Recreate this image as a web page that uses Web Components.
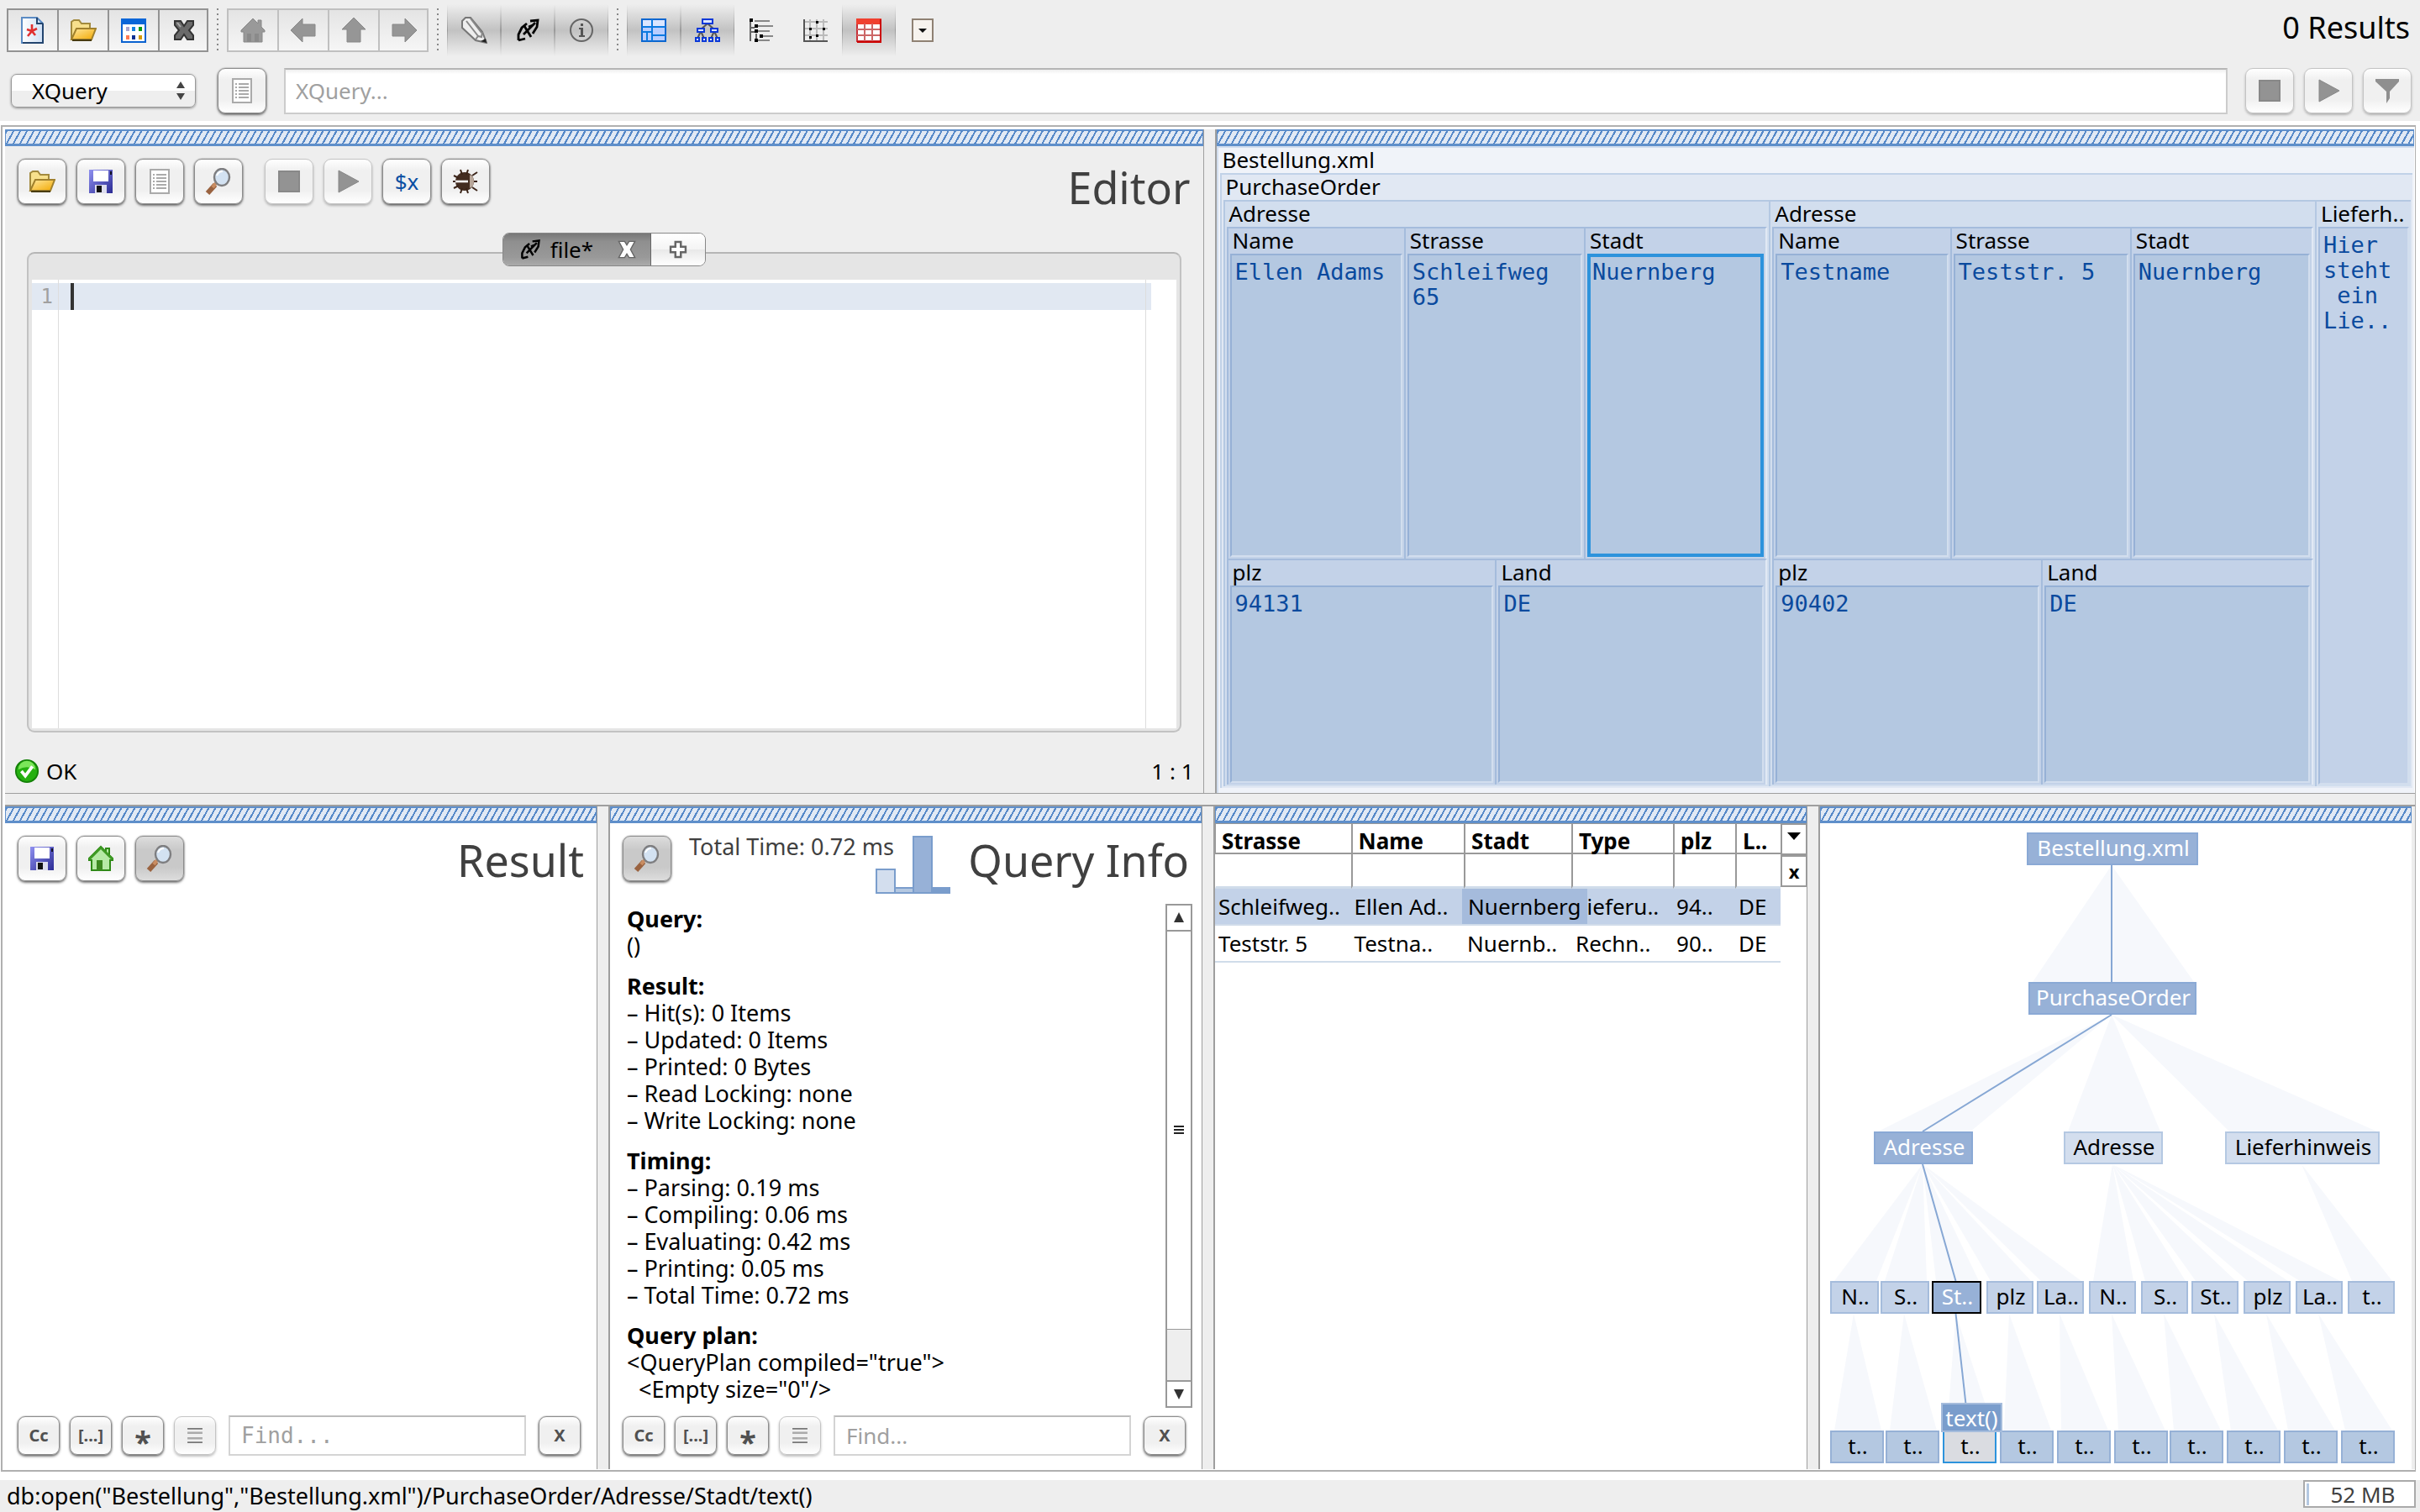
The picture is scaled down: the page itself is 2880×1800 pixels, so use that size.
<!DOCTYPE html>
<html lang="en">
<head>
<meta charset="utf-8">
<title>BaseX - Bestellung</title>
<style>
  html, body { margin: 0; height: 100%; }
  body { background: #fff; color: #000; font: 26px/32px "Noto Sans", "Open Sans", sans-serif; }
</style>
</head>
<body>
<bx-app></bx-app>

<script>
// ---- icons -------------------------------------------------------------

const ICONS = {
  new: `<defs><linearGradient id="a" x2="1"><stop stop-color="#fff"/><stop offset="1" stop-color="#cfe0f5"/></linearGradient></defs>
    <path d="M3 1h18l7 7v23H3z" fill="url(#a)" stroke="#5b8bc4" stroke-width="2"/><path d="M21 1v7h7M28 8v23H4" fill="none" stroke="#23456f" stroke-width="2"/>
    <path d="M15 9v8m0 0l-6-2m6 2l6-3m-6 3l-5 6m5-6l4 5" fill="none" stroke="#e03030" stroke-width="2.6"/>`,
  open: `<defs><linearGradient id="b" x2="1" y2="1"><stop stop-color="#ffe9a0"/><stop offset="1" stop-color="#f2a800"/></linearGradient></defs>
    <path d="M2 27V6l3-2h6l3 4h10v6" fill="#f7e08c" stroke="#a28a3e" stroke-width="2"/><path d="M2 27l6-13h23l-5 13z" fill="url(#b)" stroke="#a0802c" stroke-width="2"/><path d="M3 28h23" stroke="#493c10" stroke-width="2"/>`,
  manage: `<rect x="2" y="3" width="28" height="27" fill="#fff" stroke="#0a62d0" stroke-width="2"/><path d="M1 2h30v7H1z" fill="#0a66d8"/>
    <path d="M7 12h4v5H7z" fill="#a9a4cf"/><path d="M14 12h4v5h-4z" fill="#1583e0"/><path d="M22 12h4v5h-4z" fill="#0a9a12"/>
    <path d="M7 22h4v5H7z" fill="#ff7a52"/><path d="M14 22h4v5h-4z" fill="#0a2f92"/><path d="M22 22h4v5h-4z" fill="#d39a06"/>`,
  close: `<path d="M5 5h7l4 6 4-6h7v5l-5 6 5 6v5h-7l-4-6-4 6H5v-5l5-6-5-6z" fill="#6a6a6a" stroke="#333" stroke-width="2"/><path d="M8 7l4 5" stroke="#aaa" stroke-width="2"/>`,
  home: `<path d="M16 2L2 16v2h3v12h22V18h3v-2l-4-4V4h-4v4z" fill="#999" stroke="#888" stroke-width="1"/><path d="M9 20h5v10H9zM18 20h5v10h-5z" fill="#8a8a8a"/>`,
  back: `<path d="M1 16L15 2v7h15v14H15v7z" fill="#969696" stroke="#888"/>`,
  up: `<path d="M16 1L30 15h-6v15H8V15H2z" fill="#969696" stroke="#888"/>`,
  forward: `<path d="M31 16L17 2v7H2v14h15v7z" fill="#969696" stroke="#888"/>`,
  pencil: `<path d="M2 5l4-4h6l14 17 5 13-13-3L2 13z" fill="#eee" stroke="#777" stroke-width="2"/><path d="M7 5l14 18M12 2l13 17M18 27l3-4 4 1 1-6" stroke="#888" stroke-width="2" fill="none"/><path d="M24 29l6-3 1 5z" fill="#222"/>`,
  query: `<path d="M5 28v-7l4-8 6-5M5 28l8-2M19 5l9-1-1 8-5 8M12 11l8 13M25 7L11 21M17 12l5-2" fill="none" stroke="#000" stroke-width="2.8"/>`,
  info: `<circle cx="16" cy="16" r="13" fill="none" stroke="#666" stroke-width="2"/><path d="M15 8h3v3h-3zM13 13h5v9h2v2h-7v-2h2v-7h-2z" fill="#555"/>`,
  map: `<rect x="2" y="3" width="28" height="26" fill="#b9ceff" stroke="#0a66d0" stroke-width="2"/><path d="M3 4h10v7H3zM15 4h14v7H15z" fill="#dbe6ff"/><path d="M2 12h28M14 3v26M2 18h12M8 18v11M14 22h16" stroke="#0c7ae0" stroke-width="2"/>`,
  tree: `<path d="M16 8l-8 7M16 8l8 7M8 17l-4 9M8 17l4 9M24 17l-4 9M24 17l4 9" stroke="#555" stroke-width="2"/>
    <g fill="#dce6ff" stroke="#0a38d8" stroke-width="2"><path d="M10 3h12v5H10zM4 14h8v4H4zM20 14h8v4h-8z"/><path d="M2 25h4v4H2zM10 25h4v4h-4zM18 25h4v4h-4zM26 25h4v4h-4z"/></g>`,
  folder: `<path d="M3 4v25M3 13h5M3 18h5M10 20v8" stroke="#666" stroke-width="2"/><path d="M8 5h18M12 11h18M12 17h14M18 23h12M12 28h14" stroke="#888" stroke-width="2"/>
    <path d="M2 2h4v4H2zM8 9h4v4H8zM8 15h4v4H8zM14 21h4v4h-4zM8 26h4v4H8z"/>`,
  plot: `<path d="M10 3v26M18 3v26M26 3v26M3 6h28M3 14h28M3 22h28" stroke="#bbb" stroke-width="2"/><path d="M3 3v26h28" fill="none" stroke="#555" stroke-width="2"/><path d="M17 5h3v3h-3zM9 13h3v3H9zM25 13h3v3h-3zM17 21h3v3h-3zM9 23h3v3H9z"/>`,
  table: `<rect x="2" y="3" width="28" height="26" fill="#fff" stroke="#c83038" stroke-width="2"/><path d="M1 2h30v7H1z" fill="#f0402f"/><path d="M11 8v21M20 8v21M2 15h28M2 22h28" stroke="#c66" stroke-width="2"/><path d="M30 3v27H2" fill="none" stroke="#c00" stroke-width="2"/>`,
  drop: `<rect x="4" y="3" width="24" height="26" fill="#f7f3ee" stroke="#8f8173" stroke-width="2"/><path d="M11 14h10l-5 5z" fill="#111"/>`,
  doc: `<rect x="5" y="2" width="22" height="28" fill="#fff" stroke="#aaa" stroke-width="2"/><path d="M12 8h12M12 12h12M12 16h12M12 20h12M12 24h12M8 8h2M8 12h2M8 16h2M8 20h2M8 24h2" stroke="#aaa" stroke-width="2"/>`,
  save: `<defs><linearGradient id="c" x2="1" y2="1"><stop stop-color="#8f90f0"/><stop offset="1" stop-color="#2b2b94"/></linearGradient></defs>
    <path d="M2 2h28v28H2z" fill="url(#c)"/><path d="M7 3h18v13H7z" fill="#fff"/><path d="M9 20h14v10H9z" fill="#dde"/><path d="M11 21h6v8h-6z" fill="#111"/><path d="M27 4h2v4h-2z" fill="#112"/>`,
  find: `<path d="M12 20L3 30" stroke="#9a6340" stroke-width="6"/><path d="M13 18l-4 5" stroke="#c98d62" stroke-width="4"/><ellipse cx="20" cy="11" rx="9" ry="10" fill="#d3e2f2" stroke="#7e7e80" stroke-width="2.4"/><path d="M14 9q2-5 7-5" stroke="#fff" stroke-width="2" fill="none"/>`,
  stop: `<path d="M4 4h24v24H4z" fill="#939393" stroke="#888" stroke-width="2"/>`,
  play: `<path d="M5 3l24 13L5 29z" fill="#939393" stroke="#888"/>`,
  filter: `<path d="M2 2h28v3L19 17v8l-4 6V17L2 5z" fill="#8f8f8f"/>`,
  bug: `<ellipse cx="15" cy="16" rx="11" ry="11" fill="#432c20"/><path d="M2 9l6 3M1 16h6M2 24l6-3M10 2l2 6M19 2l-2 6M10 30l2-6M19 30l-2-6M24 9l6-4M26 16h4M24 23l6 4" stroke="#3b2418" stroke-width="2"/><path d="M4 16h15" stroke="#fff" stroke-width="2.6"/><path d="M21 8v16q5-2 5-8t-5-8z" fill="#b9a79a"/>`,
  green: `<path d="M16 2L2 16v2h3v12h22V18h3v-2l-4-4V4h-4v4z" fill="#b6eaa6" stroke="#2f8a17" stroke-width="2"/><path d="M16 3L2 17M16 3l14 14" stroke="#3e9a24" stroke-width="3"/><path d="M11 18h7v12h-7z" fill="#3c8a20"/>`,
  list: `<path d="M5 6h22M5 26h22" stroke="#777" stroke-width="2"/><path d="M5 12h22M5 20h22" stroke="#aaa" stroke-width="3"/>`,
  ok: `<circle cx="16" cy="16" r="14" fill="#25b010" stroke="#148108" stroke-width="2"/><path d="M5 14a11 11 0 0122 0q-11-6-22 0z" fill="#7be65a"/><path d="M9 16l5 6 9-12" fill="none" stroke="#fff" stroke-width="4"/>`,
  cross: `<path d="M5 5h8l3 5 3-5h8l-6 11 6 11h-8l-3-5-3 5H5l6-11z" fill="#fff" stroke="#666" stroke-width="1.6"/>`,
  plus: `<path d="M12 5h8v7h7v8h-7v7h-8v-7H5v-8h7z" fill="#fff" stroke="#666" stroke-width="3"/>`
};

class BxIcon extends HTMLElement {
  constructor() {
    super();
    this.attachShadow({ mode: 'open' });
  }
  connectedCallback() {
    this.shadowRoot.innerHTML = `
      <style>
        :host { display: block; width: 32px; height: 32px; }
        svg { display: block; width: 100%; height: 100%; }
      </style>
      <svg viewBox="0 0 32 32" aria-hidden="true">${ICONS[this.getAttribute('name')]}</svg>`;
  }
}
customElements.define('bx-icon', BxIcon);

// ---- buttons -----------------------------------------------------------

// Rounded button used in all views; "small" is the variant of the search bars.
class BxButton extends HTMLElement {
  constructor() {
    super();
    this.attachShadow({ mode: 'open' });
  }
  connectedCallback() {
    const icon = this.getAttribute('icon');
    this.shadowRoot.innerHTML = `
      <style>
        :host { display: block; flex: none; }
        button {
          display: flex; align-items: center; justify-content: center;
          box-sizing: border-box; width: 58px; height: 54px; padding: 0;
          border: 1px solid #8c8c8c; border-radius: 9px;
          background: linear-gradient(#fff, #f0f0f0 25%, #f0f0f0 70%, #fff);
          box-shadow: 0 2px 3px rgba(0, 0, 0, .5), 0 0 2px rgba(0, 0, 0, .4);
          font: inherit; color: #0a4fa3;
        }
        :host([small]) button { width: 50px; height: 46px; font: bold 20px/32px "Noto Sans", sans-serif; color: #505050; }
        :host([small]) bx-icon { width: 26px; height: 26px; }
        :host([off]) button { border-color: #c4c4c4; box-shadow: 0 2px 3px rgba(0, 0, 0, .25); }
        :host([on]) button { background: linear-gradient(#ddd, #c9c9c9 30%, #c9c9c9 70%, #ddd); }
      </style>
      <button type="button" aria-label="${this.getAttribute('label')}" ${this.hasAttribute('off') ? 'disabled' : ''}>
        ${icon ? `<bx-icon name="${icon}"></bx-icon>` : '<slot></slot>'}
      </button>`;
  }
}
customElements.define('bx-button', BxButton);

// Row of joined buttons in the main toolbar.
class BxButtonGroup extends HTMLElement {
  constructor() {
    super();
    this.attachShadow({ mode: 'open' });
  }
  connectedCallback() {
    const buttons = this.getAttribute('icons').split(' ').map(name =>
      `<button type="button" aria-label="${name}" ${this.hasAttribute('off') ? 'disabled' : ''}><bx-icon name="${name}"></bx-icon></button>`);
    this.shadowRoot.innerHTML = `
      <style>
        :host { display: flex; --line: #939393; border: 2px solid var(--line); }
        :host([off]) { --line: #c0c0c0; }
        button {
          width: 60px; height: 48px; padding: 0 0 0 13px; border: 0; border-right: 2px solid var(--line);
          background: linear-gradient(#e4e4e4, #f6f6f6);
        }
        button:last-child { border: 0; width: 56px; }
      </style>
      ${buttons.join('')}`;
  }
}
customElements.define('bx-button-group', BxButtonGroup);

class BxToggle extends HTMLElement {
  constructor() {
    super();
    this.attachShadow({ mode: 'open' });
  }
  connectedCallback() {
    const name = this.getAttribute('icon');
    this.shadowRoot.innerHTML = `
      <style>
        :host { display: block; }
        button {
          display: flex; align-items: center; justify-content: center;
          width: 64px; height: 62px; padding: 0; border: 0; background: none;
        }
        :host([on]) button {
          background:
            linear-gradient(#eee, #999, #eee) left / 1px 100% no-repeat,
            linear-gradient(#eee, #999, #eee) right / 1px 100% no-repeat,
            linear-gradient(#eee, #c2c2c2, #eee);
        }
      </style>
      <button type="button" aria-label="${name}" aria-pressed="${this.hasAttribute('on')}"><bx-icon name="${name}"></bx-icon></button>`;
  }
}
customElements.define('bx-toggle', BxToggle);

// ---- toolbar and input bar ---------------------------------------------

class BxToolbar extends HTMLElement {
  constructor() {
    super();
    this.attachShadow({ mode: 'open' });
    this.shadowRoot.innerHTML = `
      <style>
        :host { display: block; background: #eee; }
        .row { display: flex; align-items: center; }
        .tools { height: 72px; padding: 0 12px 0 8px; }
        .input { height: 72px; padding: 0 10px 0 13px; box-sizing: border-box; }
        .sep { width: 2px; height: 52px; margin: 0 10px; background: repeating-linear-gradient(#888 0 2px, transparent 2px 6px); }
        .results { margin-left: auto; padding-bottom: 6px; font-size: 36px; line-height: 40px; }
        .select { position: relative; width: 220px; margin-right: 26px; }
        select {
          appearance: none; width: 100%; height: 40px; padding: 0 24px; font: inherit; color: #000;
          border: 1px solid #999; border-radius: 7px; background: linear-gradient(#fff, #fff 50%, #eee 50%, #eee);
          box-shadow: 0 1px 3px rgba(0, 0, 0, .4);
        }
        .select svg { position: absolute; right: 12px; top: 8px; }
        input {
          flex: 1; height: 55px; box-sizing: border-box; margin: 0 21px; padding: 0 12px; font: inherit;
          border: 2px solid #ccc; border-top-color: #b5b5b5; background: linear-gradient(#eee, #fff 5px);
        }
        input::placeholder { color: #a0a0a0; opacity: 1; }
        .run { display: flex; gap: 12px; }
      </style>
      <div class="row tools">
        <bx-button-group icons="new open manage close"></bx-button-group>
        <span class="sep"></span>
        <bx-button-group icons="home back up forward" off></bx-button-group>
        <span class="sep"></span>
        <bx-toggle icon="pencil" on></bx-toggle><bx-toggle icon="query" on></bx-toggle><bx-toggle icon="info" on></bx-toggle>
        <span class="sep"></span>
        <bx-toggle icon="map" on></bx-toggle><bx-toggle icon="tree" on></bx-toggle><bx-toggle icon="folder"></bx-toggle>
        <bx-toggle icon="plot"></bx-toggle><bx-toggle icon="table" on></bx-toggle><bx-toggle icon="drop"></bx-toggle>
        <span class="results">0 Results</span>
      </div>
      <div class="row input">
        <div class="select">
          <select aria-label="Input mode"><option>XQuery</option><option>Find</option><option>Command</option></select>
          <svg width="12" height="24"><path d="M1 9l5-8 5 8zM1 15l5 8 5-8z" fill="#444"/></svg>
        </div>
        <bx-button icon="doc" label="History"></bx-button>
        <input type="text" placeholder="XQuery..." aria-label="XQuery">
        <div class="run">
          <bx-button icon="stop" label="Stop" off></bx-button>
          <bx-button icon="play" label="Run" off></bx-button>
          <bx-button icon="filter" label="Filter" off></bx-button>
        </div>
      </div>`;
  }
}
customElements.define('bx-toolbar', BxToolbar);

// ---- panels ------------------------------------------------------------

// A view with its hatched drag bar.
class BxPanel extends HTMLElement {
  constructor() {
    super();
    this.attachShadow({ mode: 'open' });
    this.shadowRoot.innerHTML = `
      <style>
        :host { display: flex; flex-direction: column; flex: 1 1 0; min-width: 0; background: #fff; }
        :host([gray]) { background: #eee; }
        .bar {
          flex: none; box-sizing: border-box; height: 20px; border: 2px solid #5f8fca; border-width: 2px 1px 3px;
          background: repeating-linear-gradient(119deg, #5588c8 0 2px, #e1e9f4 2px 7px);
        }
      </style>
      <div class="bar"></div>
      <slot></slot>`;
  }
}
customElements.define('bx-panel', BxPanel);

class BxHeader extends HTMLElement {
  constructor() {
    super();
    this.attachShadow({ mode: 'open' });
    this.shadowRoot.innerHTML = `
      <style>
        :host { display: flex; gap: 12px; align-items: flex-start; padding: 15px 15px 0; height: 80px; box-sizing: border-box; }
        h2 { margin: 0 0 0 auto; font-size: 52px; line-height: var(--title-height, 58px); font-weight: 400; color: #404040; white-space: nowrap; }
      </style>
      <slot></slot>
      <h2></h2>`;
  }
  connectedCallback() {
    this.shadowRoot.querySelector('h2').textContent = this.getAttribute('heading');
  }
}
customElements.define('bx-header', BxHeader);

class BxSearch extends HTMLElement {
  constructor() {
    super();
    this.attachShadow({ mode: 'open' });
    this.shadowRoot.innerHTML = `
      <style>
        :host { display: flex; align-items: center; gap: 12px; padding: 9px 19px 16px 15px; }
        input {
          flex: 1; min-width: 0; height: 48px; box-sizing: border-box; margin: 0 3px; padding: 0 13px;
          font: inherit; border: 2px solid #d4d4d4; border-top-color: #bbb;
        }
        input::placeholder { color: #a0a0a0; opacity: 1; }
        .star { height: 24px; font-size: 36px; line-height: 40px; }
      </style>
      <bx-button small label="Match case">Cc</bx-button>
      <bx-button small label="Whole word">[...]</bx-button>
      <bx-button small label="Regular expression"><span class="star">*</span></bx-button>
      <bx-button small icon="list" label="Multi-line" off></bx-button>
      <input type="text" placeholder="Find..." aria-label="Find">
      <bx-button small label="Close">X</bx-button>`;
  }
}
customElements.define('bx-search', BxSearch);

// ---- editor ------------------------------------------------------------

class BxEditor extends HTMLElement {
  constructor() {
    super();
    this.attachShadow({ mode: 'open' });
    this.shadowRoot.innerHTML = `
      <style>
        :host { display: flex; flex-direction: column; flex: 1; }
        bx-header { height: 103px; --title-height: 68px; }
        .group { display: flex; gap: 12px; margin-right: 14px; }
        .tabs { display: flex; align-self: center; z-index: 1; margin-bottom: -17px; border: 1px solid #888; border-radius: 8px; overflow: hidden; }
        .tabs button { display: flex; align-items: center; height: 38px; padding: 0; border: 0; font: inherit; }
        .file { width: 176px; gap: 10px; padding: 0 18px !important; background: linear-gradient(#777, #8f8f8f 25%, #999 75%, #aaa); border-right: 1px solid #666 !important; }
        .file bx-icon { width: 28px; height: 28px; }
        .file bx-icon:last-child { margin-left: auto; margin-right: -4px; }
        .add { width: 64px; justify-content: center; background: linear-gradient(#fff, #f4f4f4 50%, #e8e8e8 50%, #fff); }
        .add bx-icon { width: 26px; height: 26px; }
        .box { flex: 1; display: flex; margin: 0 26px; padding: 31px 4px 3px; border: 2px solid #c2c2c2; border-top-color: #b5b5b5; border-radius: 9px; background: #e5e5e5; }
        .code {
          position: relative; flex: 1; display: flex; font: 24px/32px "DejaVu Sans Mono", monospace;
          background: linear-gradient(#e1e8f2, #e1e8f2) 0 4px / calc(100% - 30px) 32px no-repeat #fff;
        }
        .gutter { width: 32px; box-sizing: border-box; padding: 4px 6px 0 0; text-align: right; color: #a0a0a0; border-right: 1px solid #ddd; }
        textarea { flex: 1; border: 0; padding: 4px 16px; resize: none; background: none; font: inherit; outline: 0; }
        .caret { position: absolute; left: 46px; top: 4px; width: 4px; height: 32px; background: #333; }
        .margin { width: 36px; border-left: 1px solid #ddd; }
        .status { display: flex; align-items: center; gap: 8px; height: 52px; padding: 20px 11px 0; }
        .status bx-icon { width: 30px; height: 30px; }
        .status span:last-child { margin-left: auto; }
      </style>
      <bx-header heading="Editor">
        <div class="group">
          <bx-button icon="open" label="Open"></bx-button>
          <bx-button icon="save" label="Save"></bx-button>
          <bx-button icon="doc" label="History"></bx-button>
          <bx-button icon="find" label="Find"></bx-button>
        </div>
        <bx-button icon="stop" label="Stop" off></bx-button>
        <bx-button icon="play" label="Run" off></bx-button>
        <bx-button label="External variables">$x</bx-button>
        <bx-button icon="bug" label="Tests"></bx-button>
      </bx-header>
      <div class="tabs">
        <button type="button" class="file"><bx-icon name="query"></bx-icon>file*<bx-icon name="cross"></bx-icon></button>
        <button type="button" class="add" aria-label="New tab"><bx-icon name="plus"></bx-icon></button>
      </div>
      <div class="box">
        <div class="code">
          <div class="gutter">1</div>
          <textarea aria-label="Editor"></textarea>
          <div class="margin"></div>
          <span class="caret"></span>
        </div>
      </div>
      <div class="status"><bx-icon name="ok"></bx-icon><span>OK</span><span>1 : 1</span></div>`;
  }
}
customElements.define('bx-editor', BxEditor);

// ---- treemap -----------------------------------------------------------

// One rectangle of the map: a label above its children, or plain text in a leaf.
class BxNode extends HTMLElement {
  constructor() {
    super();
    this.attachShadow({ mode: 'open' });
    this.shadowRoot.innerHTML = `
      <style>
        :host {
          display: flex; flex-direction: column; flex: 1 1 0; min-width: 0; box-sizing: border-box;
          border: 2px solid; border-right-width: 0; border-bottom-width: 0; padding: 0 2px 2px;
        }
        :host([level="0"]) { background: #f0f3f9; border-color: #d2deee; padding-bottom: 6px; }
        :host([level="1"]) { background: #e1e8f3; border-color: #c1d2e8; }
        :host([level="2"]) { background: #d2deee; border-color: #b4c8e2; }
        :host([level="3"]) { background: #c3d2e8; border-color: #a5bcdc; }
        :host([level="4"]) { background: #b4c8e1; border-color: #96b1d6; }
        :host([end]) { border-right: 2px solid #e1e9f4; }
        :host([leaf]) {
          border-right: 2px solid #d2deee; border-bottom: 2px solid #d2deee;
          font: 27px/30px "DejaVu Sans Mono", monospace; color: #0a4a9e; padding: 5px 4px;
          white-space: pre-wrap;
        }
        :host([focus]) { border: 4px solid #2d93dc; padding: 3px 2px; }
        .label { flex: none; height: 30px; line-height: 28px; padding-left: 3px; white-space: nowrap; }
        .label:empty { display: none; }
        .body { flex: 1; display: flex; min-height: 0; }
        :host([column]) .body { flex-direction: column; }
      </style>
      <div class="label"></div>
      <div class="body"><slot></slot></div>`;
  }
  connectedCallback() {
    this.shadowRoot.querySelector('.label').textContent = this.getAttribute('label') || '';
    if (this.hasAttribute('weight')) this.style.flexGrow = this.getAttribute('weight');
  }
}
customElements.define('bx-node', BxNode);

class BxMap extends HTMLElement {
  constructor() {
    super();
    this.attachShadow({ mode: 'open' });
    const leaf = (name, text, weight, extra = '') => `
      <bx-node level="3" label="${name}" weight="${weight}" ${extra}>
        <bx-node level="4" leaf ${extra.includes('mark') ? 'focus' : ''}>${text}</bx-node>
      </bx-node>`;
    const address = (name, street, city, zip, mark) => `
      <bx-node level="2" label="Adresse" weight="650" column>
        <div class="row top">${leaf('Name', name, 212)}${leaf('Strasse', street, 215)}${leaf('Stadt', city, 217, 'end ' + mark)}</div>
        <div class="row">${leaf('plz', zip, 321)}${leaf('Land', 'DE', 323, 'end')}</div>
      </bx-node>`;
    this.shadowRoot.innerHTML = `
      <style>
        :host { display: flex; flex: 1; }
        .row { display: flex; flex: 270 1 0; }
        .top { flex-grow: 396; }
      </style>
      <bx-node level="0" label="Bestellung.xml">
        <bx-node level="1" label="PurchaseOrder">
          ${address('Ellen Adams', 'Schleifweg 65', 'Nuernberg', '94131', 'mark')}
          ${address('Testname', 'Teststr. 5', 'Nuernberg', '90402', '')}
          <bx-node level="2" label="Lieferh.." weight="109">
            <bx-node level="3" leaf>Hier
steht
 ein
Lie..</bx-node>
          </bx-node>
        </bx-node>
      </bx-node>`;
  }
}
customElements.define('bx-map', BxMap);

// ---- query info --------------------------------------------------------

class BxScrollbar extends HTMLElement {
  constructor() {
    super();
    this.attachShadow({ mode: 'open' });
    this.shadowRoot.innerHTML = `
      <style>
        :host { display: flex; flex-direction: column; width: 28px; border: 2px solid #999; background: #eee; }
        button { flex: none; height: 29px; padding: 0; border: 0; background: #fff; }
        svg { display: block; margin: auto; }
        .thumb { height: 88%; display: flex; align-items: center; border: solid #999; border-width: 2px 0 1px; background: #fff; }
        .rest { flex: 1; border-bottom: 2px solid #999; }
        .track { flex: 1; display: flex; flex-direction: column; }
      </style>
      <button type="button" aria-label="Scroll up"><svg width="12" height="12"><path d="M0 12L6 0l6 12z" fill="#333"/></svg></button>
      <div class="track">
        <div class="thumb"><svg width="12" height="10"><path d="M0 1h12M0 5h12M0 9h12" stroke="#222" stroke-width="2"/></svg></div>
        <div class="rest"></div>
      </div>
      <button type="button" aria-label="Scroll down"><svg width="12" height="12"><path d="M0 0l6 12 6-12z" fill="#333"/></svg></button>`;
  }
}
customElements.define('bx-scrollbar', BxScrollbar);

class BxInfo extends HTMLElement {
  constructor() {
    super();
    this.attachShadow({ mode: 'open' });
    this.shadowRoot.innerHTML = `
      <style>
        :host { display: flex; flex-direction: column; flex: 1; min-height: 0; }
        .time { display: flex; align-items: flex-start; margin-left: 9px; font-size: 27px; line-height: 26px; color: #404040; white-space: nowrap; }
        .time svg { margin-left: -22px; }
        .main { flex: 1; min-height: 0; display: flex; padding: 16px 11px 0 20px; }
        .text { flex: 1; contain: size; overflow: hidden; font-size: 27px; line-height: 32px; padding-top: 2px; }
        p { margin: 0 0 16px; white-space: pre; }
      </style>
      <bx-header heading="Query Info">
        <bx-button icon="find" label="Find" on></bx-button>
        <div class="time">Total Time: 0.72 ms
          <svg width="90" height="70">
            <g stroke="#7a9dcc" stroke-width="2">
              <path d="M1 40h22v28H1z" fill="#d3deee"/><path d="M23 62h22v6H23z" fill="#b4c8e1"/>
              <path d="M45 1h22v67H45z" fill="#97b1d7"/><path d="M68 62h20v6H68z" fill="#7a9dcc"/>
            </g>
          </svg>
        </div>
      </bx-header>
      <div class="main">
        <div class="text">
<p><b>Query:</b>
()</p><p><b>Result:</b>
– Hit(s): 0 Items
– Updated: 0 Items
– Printed: 0 Bytes
– Read Locking: none
– Write Locking: none</p><p><b>Timing:</b>
– Parsing: 0.19 ms
– Compiling: 0.06 ms
– Evaluating: 0.42 ms
– Printing: 0.05 ms
– Total Time: 0.72 ms</p><p><b>Query plan:</b>
&lt;QueryPlan compiled="true"&gt;
  &lt;Empty size="0"/&gt;</p>
        </div>
        <bx-scrollbar></bx-scrollbar>
      </div>`;
  }
}
customElements.define('bx-info', BxInfo);

// ---- table -------------------------------------------------------------

class BxTable extends HTMLElement {
  constructor() {
    super();
    this.attachShadow({ mode: 'open' });
    const columns = ['Strasse', 'Name', 'Stadt', 'Type', 'plz', 'L..'];
    this.shadowRoot.innerHTML = `
      <style>
        :host { display: flex; align-items: flex-start; }
        table { flex: 1; table-layout: fixed; border-collapse: separate; border-spacing: 0; }
        col:nth-child(1) { width: 24%; }
        col:nth-child(2) { width: 20%; }
        col:nth-child(3) { width: 19%; }
        col:nth-child(4) { width: 18%; }
        col:nth-child(5) { width: 11%; }
        th, td { padding: 0; text-align: left; white-space: nowrap; }
        th { height: 28px; padding: 6px 0 0 7px; border: solid #999; border-width: 1px 0 2px 2px; font-size: 26px; line-height: 28px; }
        th:first-child, .filter td:first-child { border-left-width: 1px; }
        .filter td { height: 38px; border-left: 2px solid #999; border-bottom: 3px solid #d0dcea; }
        .filter td:first-child { border-left-color: transparent; }
        input { display: block; width: 100%; height: 36px; box-sizing: border-box; border: 0; padding: 0 5px; font: inherit; background: none; }
        .data td { height: 42px; padding-left: 4px; border-bottom: 2px solid #d0dcea; }
        .data td:nth-child(4) { padding-left: 5px; }
        .data td.hit { position: relative; }
        .hit span { position: absolute; left: -2px; top: 0; z-index: 1; padding: 5px 7px; background: #a5bbdc; }
        .sel td { background: #c3d2e8; }
        .side { width: 31px; }
        .side button { display: block; width: 100%; height: 38px; padding: 0; border: 2px solid #999; border-right-width: 1px; background: #fff; font: bold 22px/30px "Noto Sans", sans-serif; }
        .side svg { display: block; margin: 0 auto 6px; }
      </style>
      <table>
        <colgroup>${columns.map(() => '<col>').join('')}</colgroup>
        <tr>${columns.map(c => `<th>${c}</th>`).join('')}</tr>
        <tr class="filter">${columns.map(c => `<td><input type="text" aria-label="Filter ${c}"></td>`).join('')}</tr>
        <tr class="data sel"><td>Schleifweg..</td><td>Ellen Ad..</td><td class="hit"><span>Nuernberg</span></td><td>Lieferu..</td><td>94..</td><td>DE</td></tr>
        <tr class="data"><td>Teststr. 5</td><td>Testna..</td><td>Nuernb..</td><td>Rechn..</td><td>90..</td><td>DE</td></tr>
      </table>
      <div class="side">
        <button type="button" aria-label="Columns"><svg width="16" height="9"><path d="M0 0h16L8 9z"/></svg></button>
        <button type="button" aria-label="Reset filters">x</button>
      </div>`;
  }
}
customElements.define('bx-table', BxTable);

// ---- tree --------------------------------------------------------------

// Nodes of the tree: [level, left, width, text, parent index, class]
const TREE = [
  [0, 246, 204, 'Bestellung.xml', -1, 'path'],
  [1, 248, 200, 'PurchaseOrder', 0, 'path'],
  [2, 64, 118, 'Adresse', 1, 'path'],
  [2, 290, 118, 'Adresse', 1, ''],
  [2, 482, 184, 'Lieferhinweis', 1, ''],
  [3, 12, 58, 'N..', 2, ''],
  [3, 72, 58, 'S..', 2, ''],
  [3, 133, 59, 'St..', 2, 'path mark'],
  [3, 198, 56, 'plz', 2, ''],
  [3, 258, 56, 'La..', 2, ''],
  [3, 320, 56, 'N..', 3, ''],
  [3, 382, 56, 'S..', 3, ''],
  [3, 442, 56, 'St..', 3, ''],
  [3, 504, 56, 'plz', 3, ''],
  [3, 566, 56, 'La..', 3, ''],
  [3, 628, 56, 't..', 4, ''],
  [4, 12, 64, 't..', 5, ''],
  [4, 78, 64, 't..', 6, ''],
  [4, 146, 64, 't..', 7, 'focus'],
  [4, 214, 64, 't..', 8, ''],
  [4, 282, 64, 't..', 9, ''],
  [4, 350, 64, 't..', 10, ''],
  [4, 416, 64, 't..', 11, ''],
  [4, 484, 64, 't..', 12, ''],
  [4, 552, 64, 't..', 13, ''],
  [4, 620, 64, 't..', 14, '']
];

class BxTree extends HTMLElement {
  constructor() {
    super();
    this.attachShadow({ mode: 'open' });
    const top = level => 11 + level * 178;
    const height = 39;
    const middle = n => n[1] + n[2] / 2 - 1;
    const wedges = TREE.filter(n => n[4] >= 0).map(n => {
      const parent = TREE[n[4]];
      return `<path d="M${middle(parent)} ${top(parent[0]) + height}L${n[1] + 5} ${top(n[0])}H${n[1] + n[2] - 3}z"/>`;
    });
    const path = [0, 1, 2, 7, 18].map(i => TREE[i]);
    const lines = path.slice(1).map((n, i) =>
      `<path d="M${middle(path[i])} ${top(path[i][0]) + height}L${middle(n)} ${top(n[0])}"/>`);
    this.shadowRoot.innerHTML = `
      <style>
        :host { display: block; flex: 1; }
        .stage { position: relative; width: 704px; height: 764px; margin: 0 auto; }
        svg { display: block; }
        .node {
          position: absolute; box-sizing: border-box; height: 39px; line-height: 32px; padding-left: 2px;
          border: 2px solid; text-align: center; white-space: nowrap;
        }
        .l2 { background: #d3deee; border-color: #b4c8e2; }
        .l3 { background: #c3d2e8; border-color: #a5bcdc; }
        .l4 { background: #b4c8e1; border-color: #96b1d6; }
        .path { background: #97b1d7; border-color: #8aa9d5; color: #fff; }
        .mark { border-color: #000; }
        .focus { background: #dadce1; border-color: #2d93dc; }
        .tip { left: 144px; top: 690px; width: 73px; height: 35px; line-height: 32px; padding: 0; background: #7a9dcc; border-color: #a5bcdc; color: #fff; }
      </style>
      <div class="stage">
        <svg width="704" height="764">
          <g fill="#f6f8fc">${wedges.join('')}</g>
          <g stroke="#86a7d4" stroke-width="2">${lines.join('')}</g>
        </svg>
        ${TREE.map(([l, x, w, text, , cls]) =>
          `<div class="node l${l} ${cls}" style="left: ${x}px; top: ${top(l)}px; width: ${w}px">${text}</div>`).join('')}
        <div class="node tip">text()</div>
      </div>`;
  }
}
customElements.define('bx-tree', BxTree);

// ---- main window -------------------------------------------------------

class BxApp extends HTMLElement {
  constructor() {
    super();
    this.attachShadow({ mode: 'open' });
    this.shadowRoot.innerHTML = `
      <style>
        :host { display: flex; flex-direction: column; min-height: 100vh; }
        main { flex: 1; display: flex; flex-direction: column; margin: 5px 5px 10px 1px; border: 2px solid #b0b0b0; border-right-width: 1px; padding: 3px 0 1px 3px; }
        .row { flex: 1 1 0; display: flex; }
        .top { padding-right: 1px; }
        .bottom { padding-right: 4px; background: #eee; }
        .split { flex: none; box-sizing: border-box; width: 16px; background: #eee; border: solid #9e9e9e; border-width: 0 2px 0 1px; }
        .split.h { width: auto; height: 16px; border-width: 1px 0 2px; }
        .fill { flex: 1; }
        .mono { font-family: "DejaVu Sans Mono", monospace; }
        footer { display: flex; align-items: center; justify-content: space-between; height: 38px; padding: 0 5px 0 8px; background: #eee; font-size: 27px; }
        .memory { box-sizing: border-box; width: 134px; height: 33px; margin-bottom: 5px; border: 2px solid #aaa; background: linear-gradient(#b4c8e1, #b4c8e1) 2px 2px / 3px 26px no-repeat #fff; font-size: 26px; line-height: 30px; text-align: center; padding-left: 8px; color: #404040; }
      </style>
      <bx-toolbar></bx-toolbar>
      <main>
        <div class="row top">
          <bx-panel gray><bx-editor></bx-editor></bx-panel>
          <div class="split"></div>
          <bx-panel><bx-map></bx-map></bx-panel>
        </div>
        <div class="split h"></div>
        <div class="row bottom">
          <bx-panel>
            <bx-header heading="Result">
              <bx-button icon="save" label="Save"></bx-button>
              <bx-button icon="green" label="Home"></bx-button>
              <bx-button icon="find" label="Find" on></bx-button>
            </bx-header>
            <div class="fill"></div>
            <bx-search class="mono"></bx-search>
          </bx-panel>
          <div class="split"></div>
          <bx-panel><bx-info></bx-info><bx-search></bx-search></bx-panel>
          <div class="split"></div>
          <bx-panel><bx-table></bx-table></bx-panel>
          <div class="split"></div>
          <bx-panel><bx-tree></bx-tree></bx-panel>
        </div>
      </main>
      <footer>
        <span>db:open("Bestellung","Bestellung.xml")/PurchaseOrder/Adresse/Stadt/text()</span>
        <span class="memory">52 MB</span>
      </footer>`;
  }
}
customElements.define('bx-app', BxApp);
</script>
</body>
</html>
